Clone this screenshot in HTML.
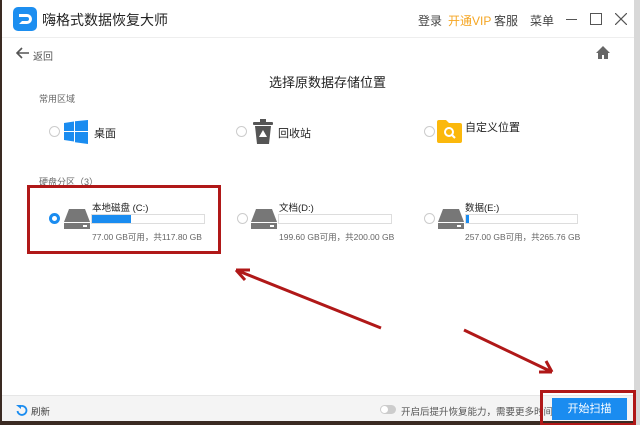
<!DOCTYPE html>
<html><head><meta charset="utf-8"><style>
*{margin:0;padding:0;box-sizing:border-box}
body{width:640px;height:425px;overflow:hidden;background:#3a2a22;font-family:"Liberation Sans","Noto Sans CJK SC",sans-serif;position:relative;color:#333}
.win{position:absolute;left:2px;top:0;width:632px;height:421px;background:#fff}
.edge{position:absolute;left:634px;top:0;width:6px;height:425px;background:#d8d8d8}
.t{position:absolute;white-space:nowrap}
.radio{position:absolute;width:11px;height:11px;border:1px solid #ccc;border-radius:50%;background:#fff}
.bar{position:absolute;height:10px;border:1px solid #ddd;background:#fff}
.bar i{position:absolute;left:0;top:0;bottom:0;background:#1a8cf0}
</style></head><body>
<div class="win">
 <svg style="position:absolute;left:11px;top:7px" width="24" height="24"><rect width="24" height="24" rx="5" fill="#1c8ef0"/><path d="M6 7h8a5 5 0 0 1 0 10H6l3-3h5a2 2 0 0 0 0-4H6z" fill="#fff"/></svg>
 <div class="t" style="left:40px;top:10px;font-size:14px;color:#222">嗨格式数据恢复大师</div>
 <div class="t" style="left:416px;top:12px;font-size:12px;color:#444">登录</div>
 <div class="t" style="left:446px;top:12px;font-size:12px;color:#f5a623">开通VIP</div>
 <div class="t" style="left:492px;top:12px;font-size:12px;color:#444">客服</div>
 <div class="t" style="left:528px;top:12px;font-size:12px;color:#444">菜单</div>
 <div style="position:absolute;left:564px;top:19px;width:11px;height:1px;background:#555"></div>
 <div style="position:absolute;left:588px;top:13px;width:12px;height:12px;border:1px solid #555"></div>
 <svg style="position:absolute;left:613px;top:13px" width="12" height="12"><path d="M0 0L12 12M12 0L0 12" stroke="#555" stroke-width="1.2"/></svg>
 <div style="position:absolute;left:0;top:37px;width:632px;height:1px;background:#eee"></div>
 <svg style="position:absolute;left:14px;top:47px" width="14" height="12"><path d="M13 6H2M6 1L1 6l5 5" stroke="#555" stroke-width="1.6" fill="none"/></svg>
 <div class="t" style="left:31px;top:48px;font-size:10px;color:#555">返回</div>
 <svg style="position:absolute;left:594px;top:46px" width="14" height="13"><path d="M7 0L0 7h2v6h4V9h2v4h4V7h2z" fill="#666"/></svg>
 <div class="t" style="left:267px;top:72px;font-size:13px;color:#222">选择原数据存储位置</div>
 <div class="t" style="left:37px;top:92px;font-size:9px;color:#666">常用区域</div>
 <div class="radio" style="left:47px;top:126px"></div>
 <svg style="position:absolute;left:62px;top:120px" width="24" height="24"><path d="M0 3l10-1.5V11H0zM11 1.3L24 0v11H11zM0 12h10v9.5L0 20zM11 12h13v12l-13-1.7z" fill="#1a8cf0"/></svg>
 <div class="t" style="left:92px;top:125px;font-size:11px;color:#222">桌面</div>
 <div class="radio" style="left:234px;top:126px"></div>
 <svg style="position:absolute;left:250px;top:119px" width="22" height="25"><rect x="1" y="3" width="20" height="3" rx="1" fill="#555"/><rect x="8" y="0" width="6" height="3" fill="#555"/><path d="M3 7h16l-2 18H5z" fill="#555"/><path d="M11 11l4 7H7z" fill="#fff"/></svg>
 <div class="t" style="left:276px;top:125px;font-size:11px;color:#222">回收站</div>
 <div class="radio" style="left:422px;top:126px"></div>
 <svg style="position:absolute;left:435px;top:120px" width="25" height="23"><path d="M0 2a2 2 0 0 1 2-2h7l3 3h11a2 2 0 0 1 2 2v16a2 2 0 0 1-2 2H2a2 2 0 0 1-2-2z" fill="#fbb80c"/><circle cx="12" cy="12" r="4" stroke="#fff" stroke-width="2" fill="none"/><path d="M15 15l3 3" stroke="#fff" stroke-width="2"/></svg>
 <div class="t" style="left:463px;top:119px;font-size:11px;color:#222">自定义位置</div>
 <div class="t" style="left:37px;top:175px;font-size:9px;color:#666">硬盘分区（3）</div>
 <div class="radio" style="left:47px;top:213px;border:3px solid #1a8cf0"></div>
 <div class="radio" style="left:235px;top:213px"></div>
 <div class="radio" style="left:422px;top:213px"></div>
 <svg style="position:absolute;left:62px;top:209px" width="26" height="20"><path d="M5 0h16l5 13v7H0v-7z" fill="#777"/><rect x="0" y="13" width="26" height="1" fill="#fff"/><rect x="19" y="16" width="4" height="2" fill="#fff"/></svg>
 <svg style="position:absolute;left:249px;top:209px" width="26" height="20"><path d="M5 0h16l5 13v7H0v-7z" fill="#777"/><rect x="0" y="13" width="26" height="1" fill="#fff"/><rect x="19" y="16" width="4" height="2" fill="#fff"/></svg>
 <svg style="position:absolute;left:436px;top:209px" width="26" height="20"><path d="M5 0h16l5 13v7H0v-7z" fill="#777"/><rect x="0" y="13" width="26" height="1" fill="#fff"/><rect x="19" y="16" width="4" height="2" fill="#fff"/></svg>
 <div class="t" style="left:90px;top:200px;font-size:9.5px;color:#222">本地磁盘 (C:)</div>
 <div class="bar" style="left:89px;top:214px;width:114px"><i style="width:39px"></i></div>
 <div class="t" style="left:90px;top:231px;font-size:8.5px;color:#666">77.00 GB可用，共117.80 GB</div>
 <div class="t" style="left:277px;top:200px;font-size:9.5px;color:#222">文档(D:)</div>
 <div class="bar" style="left:276px;top:214px;width:114px"></div>
 <div class="t" style="left:277px;top:231px;font-size:8.5px;color:#666">199.60 GB可用，共200.00 GB</div>
 <div class="t" style="left:463px;top:200px;font-size:9.5px;color:#222">数据(E:)</div>
 <div class="bar" style="left:463px;top:214px;width:113px"><i style="width:3px"></i></div>
 <div class="t" style="left:463px;top:231px;font-size:8.5px;color:#666">257.00 GB可用，共265.76 GB</div>
 <div style="position:absolute;left:0;top:395px;width:632px;height:26px;background:#f4f4f4;border-top:1px solid #e6e6e6"></div>
 <svg style="position:absolute;left:14px;top:404px" width="12" height="12"><path d="M3 3A4.5 4.5 0 1 1 1.5 7" stroke="#1a8cf0" stroke-width="1.8" fill="none"/><path d="M0 1h5v4z" fill="#1a8cf0"/></svg>
 <div class="t" style="left:29px;top:404px;font-size:9.5px;color:#444">刷新</div>
 <div style="position:absolute;left:378px;top:405px;width:16px;height:9px;border-radius:5px;background:#ccc"></div>
 <div style="position:absolute;left:379px;top:406px;width:7px;height:7px;border-radius:50%;background:#fff"></div>
 <div class="t" style="left:399px;top:404px;font-size:9.5px;color:#555">开启后提升恢复能力，需要更多时间</div>
 <div style="position:absolute;left:550px;top:398px;width:75px;height:22px;background:#1a8cf0;color:#fff;font-size:11px;text-align:center;line-height:22px">开始扫描</div>
</div>
<div class="edge"></div>
<svg style="position:absolute;left:0;top:0" width="640" height="425">
 <rect x="28.5" y="186.5" width="191" height="66" fill="none" stroke="#b01818" stroke-width="3"/>
 <rect x="541.5" y="391.5" width="93" height="33" fill="none" stroke="#b01818" stroke-width="3"/>
 <path d="M381 328L236 270M236 270l14 0M236 270l9 10" stroke="#b01818" stroke-width="3" fill="none"/>
 <path d="M464 330L552 372M552 372l-13 0M552 372l-6 -11" stroke="#b01818" stroke-width="3" fill="none"/>
</svg>
</body></html>
